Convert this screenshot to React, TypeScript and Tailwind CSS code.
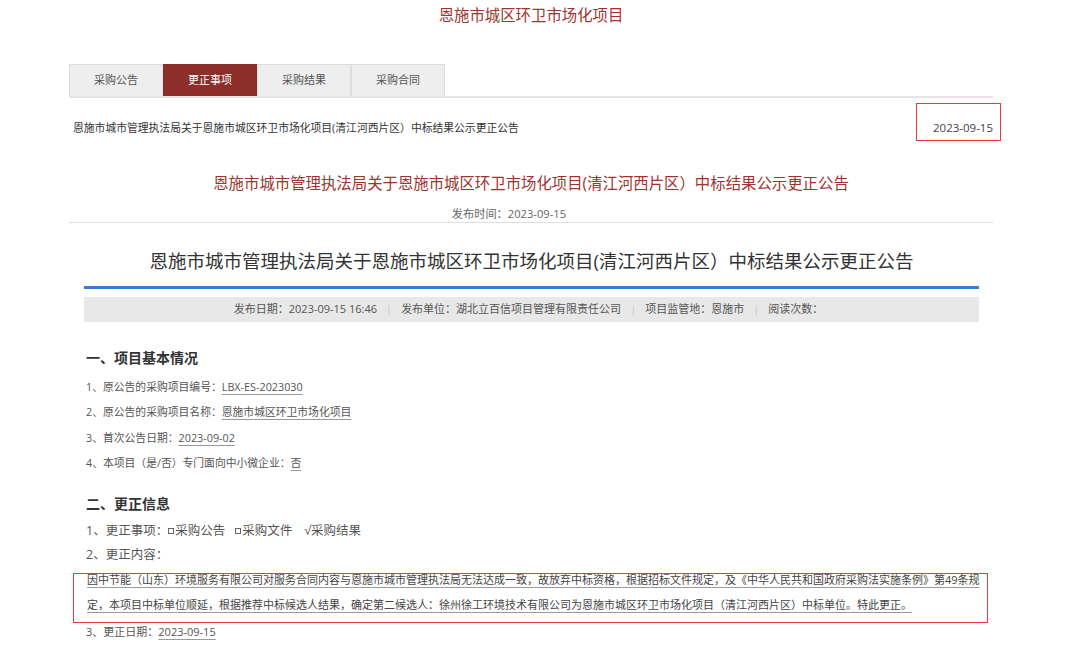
import React from "react";

const FONT = { fontFamily: '"Open Sans", "Noto Sans CJK SC", "Noto Sans", sans-serif' };

function Box() {
  return <span className="inline-block w-[6px] h-[6px] border border-[#666] mr-[1px] align-[1px]" />;
}

export default function App() {
  const tabs = ["采购公告", "更正事项", "采购结果", "采购合同"];
  const title = "恩施市城市管理执法局关于恩施市城区环卫市场化项目(清江河西片区）中标结果公示更正公告";
  const u = "underline decoration-[#9a9a9a] underline-offset-[3px] decoration-1";
  return (
    <div className="w-[1080px] h-[648px] overflow-hidden bg-white text-[#555]" style={FONT}>
      <div className="ml-[69px] w-[924px]">
        <div className="h-[32px] flex items-center justify-center text-[15.4px] text-[#a0332e]">
          恩施市城区环卫市场化项目
        </div>
        <div className="h-[32px]" />
        <div className="flex border-b-2 border-[#e6e6e6]">
          {tabs.map((t, i) => (
            <div
              key={t}
              className={
                "w-[94px] h-[32px] flex items-center justify-center text-[11px] border-t border-x " +
                (i === 1
                  ? "bg-[#8c2f2a] text-white border-[#8c2f2a]"
                  : "bg-[#eeeeee] text-[#555] border-[#dddddd]")
              }
            >
              {t}
            </div>
          ))}
        </div>
        <div className="mt-[5px] h-[38px] flex justify-between">
          <div className="pl-[4px] flex items-end pb-[5px] text-[10.8px] leading-[16px] text-[#333]">{title}</div>
          <div className="-mr-[8px] h-[38px] border border-[#e53b3b] pl-[16px] pr-[7px] flex items-end pb-[4px] text-[11.5px] leading-[16px] text-[#444]">
            2023-09-15
          </div>
        </div>
        <div className="mt-[31px] text-center text-[15.4px] leading-[24px] text-[#a0332e]">{title}</div>
        <div className="mt-[10px] pr-[44px] text-center text-[11.2px] leading-[16px] text-[#666] border-b border-[#dedede]">
          发布时间：2023-09-15
        </div>

        <div className="ml-[15px] w-[895px]">
          <div className="mt-[24px] text-center text-[18.5px] leading-[28px] text-[#333]">{title}</div>
          <div className="mt-[11px] h-[3px] bg-[#2f7fd2]" />
          <div className="mt-[8px] h-[25px] bg-[#e8e8e8] flex items-center justify-center text-[11px] text-[#555] pr-[6px]">
            <span>发布日期：2023-09-15 16:46</span>
            <span className="mx-[9px] text-[#c8c8c8]">|</span>
            <span>发布单位：湖北立百信项目管理有限责任公司</span>
            <span className="mx-[9px] text-[#c8c8c8]">|</span>
            <span>项目监管地：恩施市</span>
            <span className="mx-[9px] text-[#c8c8c8]">|</span>
            <span>阅读次数：</span>
          </div>

          <div className="pl-[2px]">
            <div className="mt-[25px] text-[14px] leading-[22px] font-bold text-[#333]">一、项目基本情况</div>
            <div className="mt-[4.5px] text-[10.8px] leading-[25.5px] text-[#555]">
              <div>
                1、原公告的采购项目编号：<span className={u}>LBX-ES-2023030</span>
              </div>
              <div>
                2、原公告的采购项目名称：<span className={u}>恩施市城区环卫市场化项目</span>
              </div>
              <div>
                3、首次公告日期：<span className={u}>2023-09-02</span>
              </div>
              <div>
                4、本项目（是/否）专门面向中小微企业：<span className={u}>否</span>
              </div>
            </div>

            <div className="mt-[17.5px] text-[14px] leading-[22px] font-bold text-[#333]">二、更正信息</div>
            <div className="mt-[4px] text-[12.5px] leading-[24px] text-[#555]">
              <div>
                1、更正事项：<Box />采购公告<span className="inline-block w-[10px]" />
                <Box />采购文件<span className="inline-block w-[12px]" />√采购结果
              </div>
              <div>2、更正内容：</div>
            </div>
          </div>

          <div className="mt-[6px] -ml-[11px] -mr-[9px] h-[50px] border border-[#e53b3b] pl-[13px] pr-[5px]">
            <p className="-mt-[7px] text-[11px] leading-[25px] text-[#444]">
              <span className={u}>
                因中节能（山东）环境服务有限公司对服务合同内容与恩施市城市管理执法局无法达成一致，故放弃中标资格，根据招标文件规定，及《中华人民共和国政府采购法实施条例》第49条规定，本项目中标单位顺延，根据推荐中标候选人结果，确定第二候选人：徐州徐工环境技术有限公司为恩施市城区环卫市场化项目（清江河西片区）中标单位。特此更正。
              </span>
            </p>
          </div>
          <div className="pl-[2px] text-[11px] leading-[18px] text-[#555]">
            3、更正日期：<span className={u}>2023-09-15</span>
          </div>
        </div>
      </div>
    </div>
  );
}
